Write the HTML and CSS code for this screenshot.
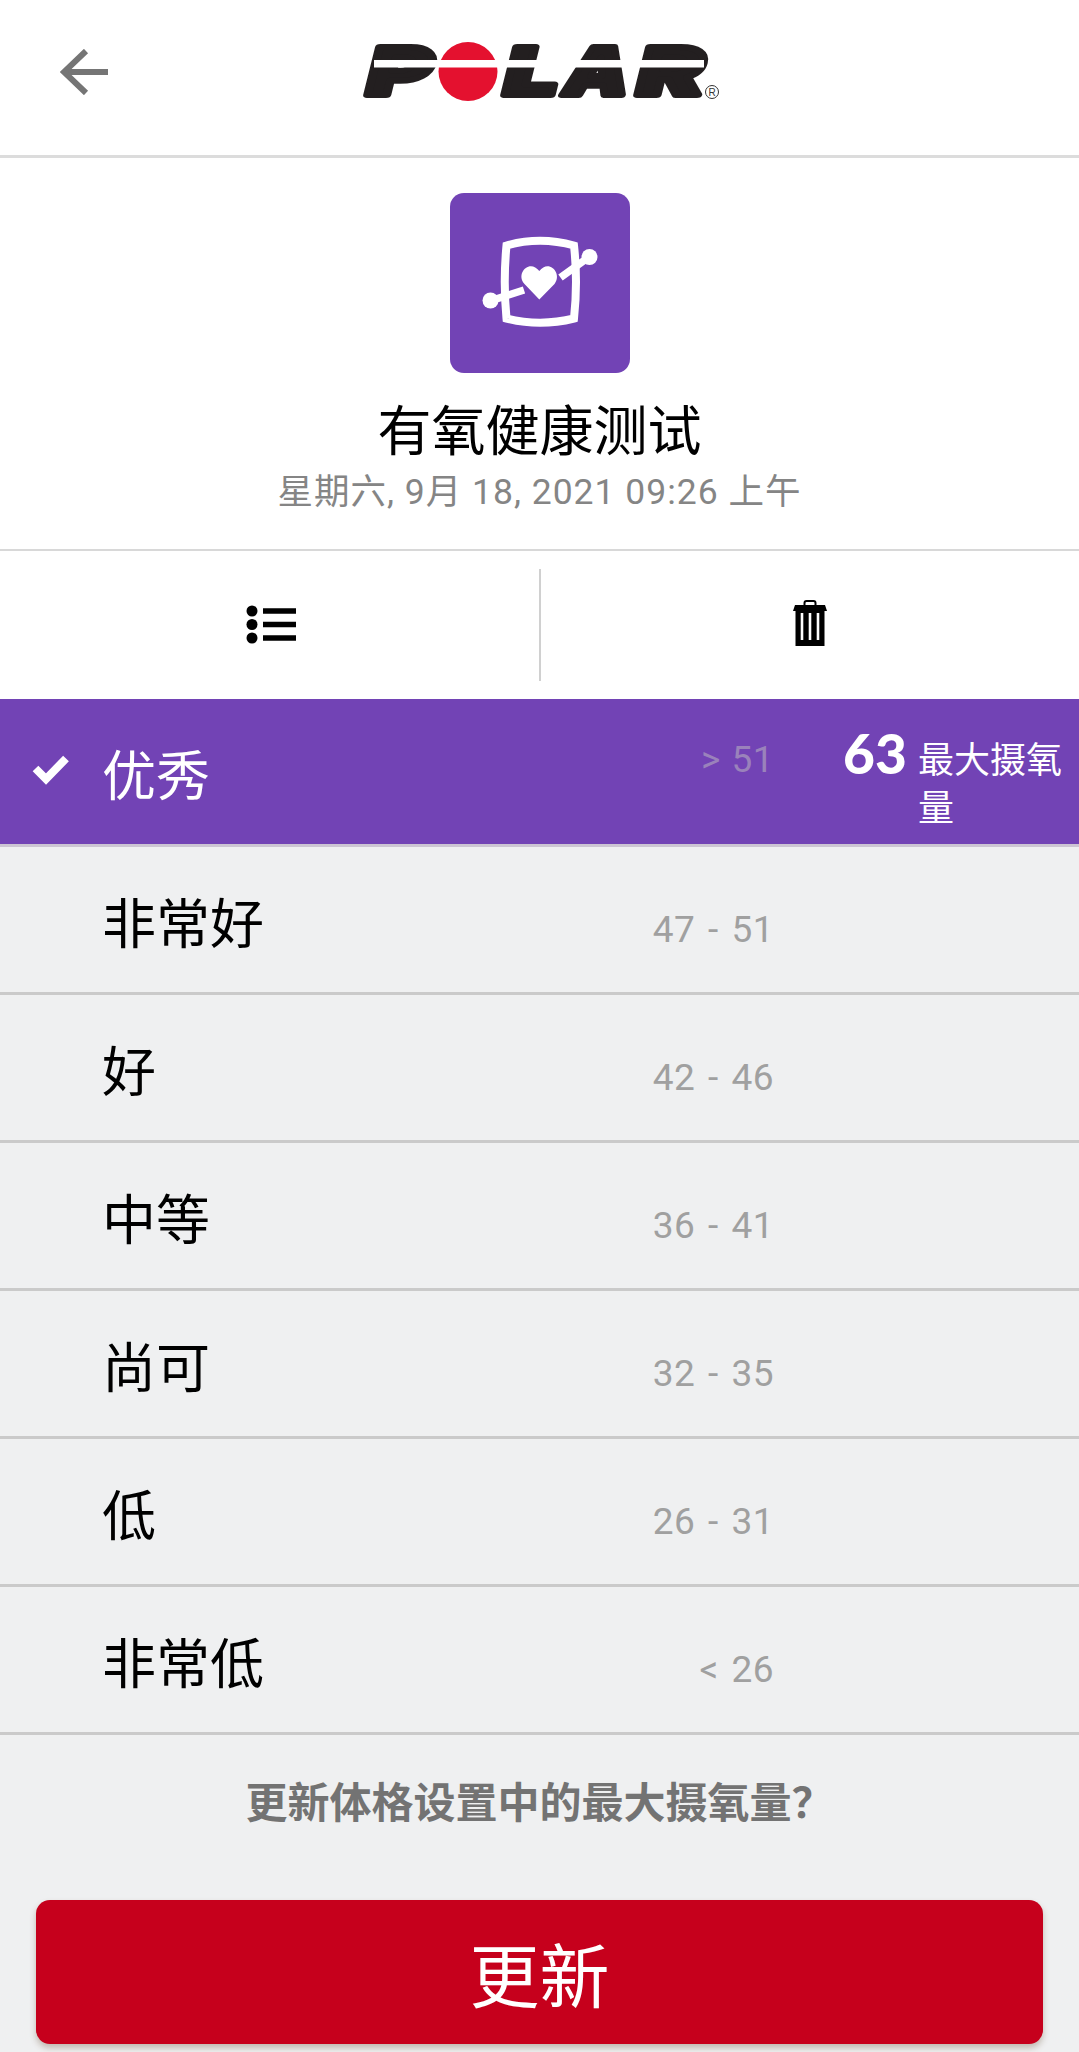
FILE: index.html
```html
<!DOCTYPE html>
<html lang="zh-CN">
<head>
    <meta charset="UTF-8">
    <meta name="viewport" content="width=device-width, initial-scale=1.0">
    <title>有氧健康测试</title>
    <link rel="stylesheet" href="styles.css">
</head>
<body>
    <header class="top-bar">
        <svg class="back-icon" viewBox="0 0 50 46" fill="none" stroke="#757575" stroke-width="6">
            <path d="M48 23H6" />
            <path d="M26 2L4 23l22 21" />
        </svg>
        <svg class="logo" viewBox="0 0 364 64" role="img" aria-label="POLAR">
            <g class="logo-text">
                <text transform="translate(3 55) skewX(-14)" textLength="64" lengthAdjust="spacingAndGlyphs">P</text>
                <text transform="translate(140 55) skewX(-14)" textLength="54" lengthAdjust="spacingAndGlyphs">L</text>
                <text transform="translate(200 55) skewX(-14)" textLength="64" lengthAdjust="spacingAndGlyphs">A</text>
                <text transform="translate(273 55) skewX(-14)" textLength="66" lengthAdjust="spacingAndGlyphs">R</text>
            </g>
            <circle cx="108" cy="31.500" r="29.500" fill="#e4112f" />
            <path d="M14 20h330v7.500H14z" fill="#fff" />
            <circle cx="352" cy="52" r="6.500" fill="none" stroke="#333" stroke-width="1" />
            <text class="logo-mark" x="352" y="55.500" text-anchor="middle">R</text>
        </svg>
    </header>

    <section class="test-info">
        <svg class="test-icon" viewBox="0 0 180 180">
            <rect width="180" height="180" rx="14" fill="#7243b5" />
            <path d="M56.500 52.500Q90 43 124 52.500Q128 89 124 125.500Q90 134 56.500 125.500Q53 89 56.500 52.500Z" fill="none" stroke="#fff" stroke-width="8" />
            <path d="M40 108L74 97M110.500 84.500L139 64" stroke="#fff" stroke-width="7.500" />
            <circle cx="40.500" cy="107.500" r="8" fill="#fff" />
            <circle cx="139.500" cy="64" r="8" fill="#fff" />
            <path d="M89.300 106.500L74.500 91C65 80 80 65.500 89.300 78C98.500 65.500 113 80 104.500 91Z" fill="#fff" />
        </svg>
        <h1>有氧健康测试</h1>
        <p class="test-date">星期六, 9月 18, 2021 09:26 上午</p>
    </section>

    <nav class="actions">
        <button class="action" aria-label="列表">
            <svg class="list-icon" viewBox="0 0 50 40">
                <circle cx="6" cy="6" r="5.500" />
                <circle cx="6" cy="19.500" r="5.500" />
                <circle cx="6" cy="33" r="5.500" />
                <path d="M17 3.200h33v5.600H17zM17 16.700h33v5.600H17zM17 30.200h33v5.600H17z" />
            </svg>
        </button>
        <button class="action" aria-label="删除">
            <svg class="trash-icon" viewBox="0 0 34 46">
                <path d="M11.500 6V3q0-2 2-2h7q2 0 2 2v3" fill="none" stroke="#000" stroke-width="2" />
                <path d="M2 5h30l2 6H0z" />
                <path d="M2.500 10h29v36h-29z" />
                <path d="M9 13v27M17 13v27M25 13v27" stroke="#fff" stroke-width="2.600" />
            </svg>
        </button>
    </nav>

    <ul class="levels">
        <li class="level active">
            <svg class="check-icon" viewBox="0 0 38 32">
                <path d="M3.500 15.500L14 26L34 5.500" fill="none" stroke="#fff" stroke-width="8" />
            </svg>
            <span class="name">优秀</span>
            <span class="range">&gt; 51</span>
            <span class="result"><strong>63</strong><span class="unit">最大摄氧量</span></span>
        </li>
        <li class="level"><span class="name">非常好</span><span class="range">47 - 51</span></li>
        <li class="level"><span class="name">好</span><span class="range">42 - 46</span></li>
        <li class="level"><span class="name">中等</span><span class="range">36 - 41</span></li>
        <li class="level"><span class="name">尚可</span><span class="range">32 - 35</span></li>
        <li class="level"><span class="name">低</span><span class="range">26 - 31</span></li>
        <li class="level"><span class="name">非常低</span><span class="range">&lt; 26</span></li>
    </ul>

    <section class="update">
        <p>更新体格设置中的最大摄氧量？</p>
        <button class="update-button">更新</button>
    </section>
</body>
</html>
```
FILE: styles.css
```css
* {
    box-sizing: border-box;
}
body {
    margin: 0;
    height: 2052px;
    overflow: hidden;
    background-color: #eff0f1;
    color: #000;
    font-family: Roboto, "Noto Sans CJK SC", sans-serif;
}
h1, p, ul {
    margin: 0;
    padding: 0;
}
button {
    border: none;
    padding: 0;
    background: none;
    font-family: inherit;
    cursor: pointer;
}
.top-bar {
    display: flex;
    align-items: flex-start;
    height: 158px;
    padding: 40px 0 0 60px;
    background-color: #fff;
    border-bottom: 3px solid #dcdcdc;
}
.back-icon {
    width: 50px;
    height: 46px;
    margin-top: 9px;
}
.logo {
    width: 364px;
    height: 64px;
    margin-left: 250px;
    overflow: visible;
}
.logo-text {
    font-family: Inter, sans-serif;
    font-size: 66px;
    font-weight: 900;
    fill: #231f20;
    stroke: #231f20;
    stroke-width: 6px;
    stroke-linejoin: round;
}
.logo-mark {
    font-family: "Liberation Sans", sans-serif;
    font-size: 10px;
    fill: #333;
}
.test-info {
    display: flex;
    flex-direction: column;
    align-items: center;
    height: 393px;
    padding-top: 35px;
    background-color: #fff;
    border-bottom: 2px solid #d8d8d8;
}
.test-icon {
    width: 180px;
    height: 180px;
}
h1 {
    margin-top: 28px;
    font-size: 54px;
    font-weight: 400;
    line-height: 64px;
}
.test-date {
    margin-top: 5px;
    font-size: 35.5px;
    line-height: 44px;
    letter-spacing: 1px;
    color: #858585;
}
.actions {
    display: flex;
    height: 148px;
    padding: 18px 0;
    background-color: #fff;
}
.action {
    flex: 1;
    display: flex;
    justify-content: center;
    align-items: center;
}
.action + .action {
    border-left: 2px solid #d0d0d0;
}
.list-icon {
    width: 50px;
    height: 40px;
    margin-left: 4px;
}
.trash-icon {
    width: 34px;
    height: 46px;
    margin-bottom: 4px;
}
.levels {
    list-style: none;
}
.level {
    display: grid;
    grid-template-columns: 70px 442px 152px 1fr;
    height: 148px;
    padding-left: 32px;
    border-bottom: 3px solid #cacaca;
}
.name {
    grid-column: 2;
    align-self: center;
    padding-top: 12px;
    font-size: 54px;
    line-height: 64px;
}
.range {
    grid-column: 3;
    padding-top: 61px;
    justify-self: end;
    margin-right: -78px;
    font-size: 37px;
    line-height: 44px;
    letter-spacing: 0.5px;
    word-spacing: 3px;
    color: #a0a0a0;
    white-space: nowrap;
}
.active {
    background-color: #7243b5;
    border-bottom-color: #ccc5d3;
    color: #fff;
}
.check-icon {
    width: 38px;
    height: 32px;
    margin-top: 54px;
}
.active .range {
    padding-top: 39px;
    word-spacing: 1px;
    color: #9a82bb;
}
.result {
    display: flex;
    padding-left: 147px;
    line-height: 48px;
}
.result strong {
    margin-top: 30px;
    width: 75px;
    font-family: Lato, sans-serif;
    font-size: 55px;
    font-weight: 900;
}
.unit {
    width: 160px;
    margin-top: 38px;
    font-size: 36px;
}
.update {
    padding: 43px 36px 0;
    text-align: center;
}
.update p {
    font-size: 42px;
    font-weight: 700;
    line-height: 52px;
    color: #737373;
}
.update-button {
    width: 1007px;
    height: 144px;
    margin-top: 70px;
    border-radius: 14px;
    background-color: #c6001c;
    box-shadow: 0 4px 6px rgba(90, 60, 30, 0.3);
    color: #fff;
    font-size: 70px;
}
```
